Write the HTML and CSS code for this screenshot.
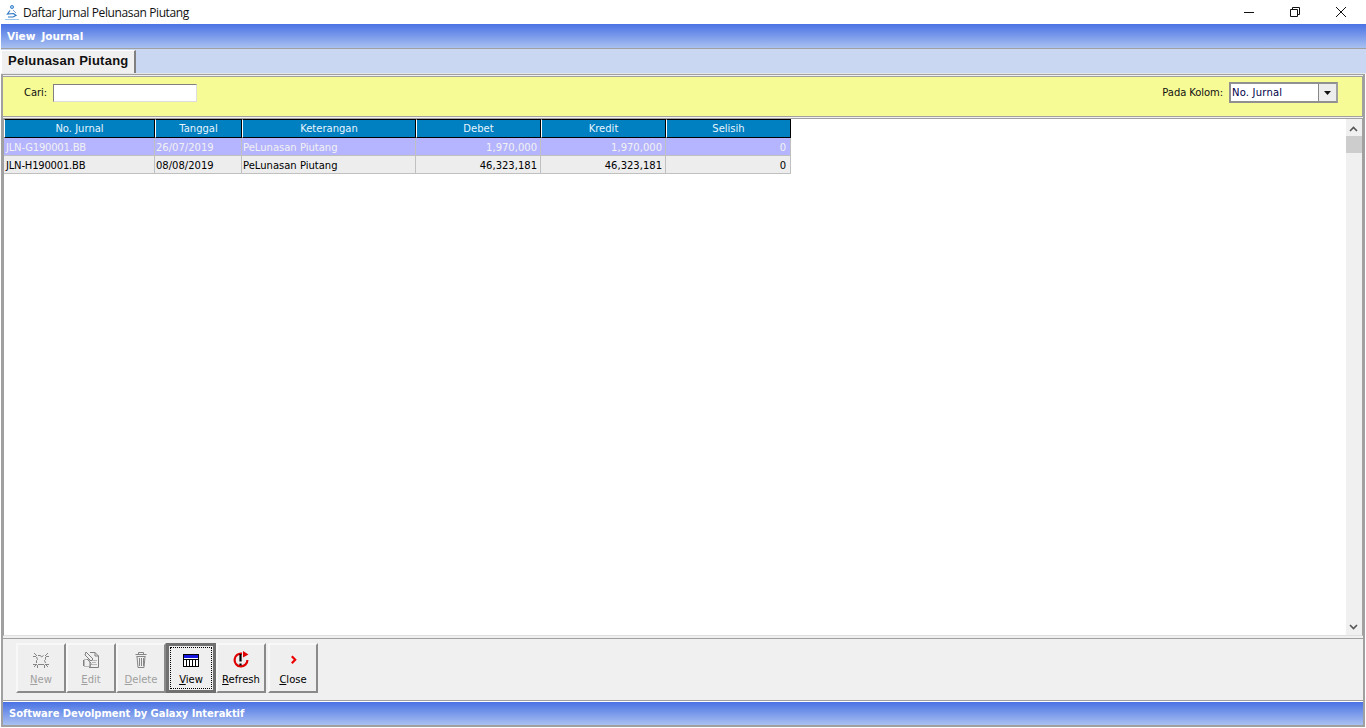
FILE: index.html
```html
<!DOCTYPE html>
<html lang="id">
<head>
<meta charset="utf-8">
<title>Daftar Jurnal Pelunasan Piutang</title>
<link rel="stylesheet" href="styles.css">
</head>
<body>
<div class="window">
  <header class="titlebar">
    <svg class="app-icon" width="16" height="16" viewBox="0 0 16 16" fill="none"><circle cx="8" cy="3" r="1.600" fill="#9cc6ea" stroke="#2f78c4" stroke-width=".8"/><path d="M6 6.500L3.500 10l6-.5 2.500 2-3 1.500H4" stroke="#2f78c4" stroke-width="1.200"/><path d="M9 6l3 3" stroke="#7a9fd0"/><path d="M1 15.500h14" stroke="#9cc6ea"/></svg>
    <span class="title">Daftar Jurnal Pelunasan Piutang</span>
    <div class="winctl">
      <svg width="12" height="12" viewBox="0 0 12 12"><path d="M1 6.500h10" stroke="#111" fill="none"/></svg>
      <svg width="12" height="12" viewBox="0 0 12 12"><path d="M1.500 3.500h7v7h-7zM3.500 3.500v-2h7v7h-2" stroke="#111" fill="none"/></svg>
      <svg width="12" height="12" viewBox="0 0 12 12"><path d="M1 1l10 10M11 1L1 11" stroke="#111" fill="none"/></svg>
    </div>
  </header>
  <div class="frame">
    <div class="banner menu"><span>View</span><span>Journal</span></div>
    <div class="tabstrip"><div class="tab">Pelunasan Piutang</div></div>
    <div class="tabbody">
      <div class="filter">
        <label class="lbl">Cari:</label>
        <div class="search"></div>
        <div class="spacer"></div>
        <label class="lbl">Pada Kolom:</label>
        <div class="combo"><span class="combo-text">No. Jurnal</span><span class="combo-btn"><svg width="7" height="4" viewBox="0 0 7 4"><path d="M0 0h7L3.500 4z" fill="#111"/></svg></span></div>
      </div>
      <div class="gridbox">
        <div class="grid">
          <div class="row head"><div class="c c1">No. Jurnal</div><div class="c c2">Tanggal</div><div class="c c3">Keterangan</div><div class="c c4">Debet</div><div class="c c5">Kredit</div><div class="c c6">Selisih</div></div>
          <div class="row sel"><div class="c c1">JLN-G190001.BB</div><div class="c c2">26/07/2019</div><div class="c c3">PeLunasan Piutang</div><div class="c c4">1,970,000</div><div class="c c5">1,970,000</div><div class="c c6">0</div></div>
          <div class="row norm"><div class="c c1">JLN-H190001.BB</div><div class="c c2">08/08/2019</div><div class="c c3">PeLunasan Piutang</div><div class="c c4">46,323,181</div><div class="c c5">46,323,181</div><div class="c c6">0</div></div>
        </div>
        <div class="scroll">
          <svg width="9" height="6" viewBox="0 0 9 6"><path d="M1 5l3.500-3.500L8 5" stroke="#555" stroke-width="1.600" fill="none"/></svg>
          <div class="thumb"></div>
          <div class="spacer"></div>
          <svg width="9" height="6" viewBox="0 0 9 6"><path d="M1 1l3.500 3.500L8 1" stroke="#555" stroke-width="1.600" fill="none"/></svg>
        </div>
      </div>
      <div class="toolbar">
        <button class="btn off"><svg width="20" height="20" viewBox="0 0 20 20" fill="none" stroke="#858585"><path d="M7 5.500h2.500l1 1.500 2-1.500M14.500 7v2.500l-1 1 1 2.500M13 14.500H7M5.500 13v-2.500l1-1-1-2.500"/><path d="M3 3l3 3M17 3l-3 3M3 17l3-3M17 17l-3-3M2 6.500h3M15 6.500h3M2 14.500h3M15 14.500h3M6.500 15v3M13.500 15v3"/></svg><span><u>N</u>ew</span></button>
        <button class="btn off"><svg width="20" height="20" viewBox="0 0 20 20" fill="none" stroke="#808080"><path d="M9 2.500h5l3.500 3.500v11.500H8"/><path d="M14 2.500V6h3.500M5 2l7 7-2 2-6-6z"/><path d="M3.500 9.500h5v7h-5zM10.500 10.500h5M11.500 12.500h4M10.500 14.500h5" stroke-dasharray="1 1"/><path d="M2.500 10v6M6 9l4 4-1 4"/></svg><span><u>E</u>dit</span></button>
        <button class="btn off"><svg width="20" height="20" viewBox="0 0 20 20" fill="none" stroke="#858585"><path d="M7.500 4V2.500h5V4M4.500 4.500h11M5.500 6.500h9"/><path d="M6 6.500l1 11h6l1-11M8.500 8v8M10.500 8v8M12.500 8v8"/></svg><span><u>D</u>elete</span></button>
        <button class="btn focus"><svg width="20" height="20" viewBox="0 0 20 20"><rect x="2.500" y="4.500" width="15" height="12" fill="#fff" stroke="#000"/><rect x="3" y="5" width="14" height="3" fill="#1616e0"/><path d="M3 9.500h14M5.500 10v6M8.500 10v6M11.500 10v6M14.500 10v6" stroke="#000"/></svg><span><u>V</u>iew</span></button>
        <button class="btn"><svg width="20" height="20" viewBox="0 0 20 20" fill="none"><path d="M11 3.700A6.400 6.400 0 1 0 16.400 10" stroke="#e00000" stroke-width="2.200"/><path d="M12 1l5.500 3.500L12 7.500z" fill="#e00000"/><path d="M9.500 4v7.500" stroke="#000" stroke-width="2.200"/><path d="M9.500 13.500v2" stroke="#000" stroke-width="2.200"/></svg><span><u>R</u>efresh</span></button>
        <button class="btn"><svg width="20" height="20" viewBox="0 0 20 20" fill="none"><path d="M8.800 6.200l3.400 3.500-3.400 3.500" stroke="#ee0000" stroke-width="2.200"/></svg><span><u>C</u>lose</span></button>
      </div>
    </div>
    <div class="banner status">Software Devolpment by Galaxy Interaktif</div>
  </div>
</div>
</body>
</html>
```
FILE: styles.css
```css
* { box-sizing: border-box; }
html, body { margin: 0; height: 100%; overflow: hidden; background: #fff; }
body { font-family: "DejaVu Sans", sans-serif; font-size: 10px; color: #000; }
.window { height: 728px; display: flex; flex-direction: column; }
.titlebar { height: 24px; display: flex; align-items: center; padding-left: 4px; flex: none; }
.app-icon { flex: none; }
.title { margin-left: 3px; font: 12px "Open Sans", sans-serif; letter-spacing: -0.38px; color: #111; }
.winctl { margin-left: auto; display: flex; gap: 34px; padding-right: 19px; }
.frame { flex: 1; display: flex; flex-direction: column; min-height: 0; margin: 0 1px 1px; border: 2px solid #a0a0a0; border-top: 0; }
.banner { background: linear-gradient(#4a72e4, #a9c1f1); color: #fff; font-weight: 700; flex: none; }
.menu { height: 25px; border-bottom: 1px solid #a0a0a0; display: flex; align-items: center; gap: 6px; font-size: 10.500px; margin: 0 -3px 0 -2px; padding-left: 6px; }
.tabstrip { height: 25px; background: #c9d7f3; border-bottom: 1px solid #e8e8e8; flex: none; padding-top: 1px; margin: 0 -3px 0 -2px; }
.tab { width: 135px; height: 23px; background: #f0f0f0; border-top: 1px solid #fff; border-right: 2px solid #808080; border-left: 1px solid #fff; font: 700 13px "Liberation Sans", sans-serif; letter-spacing: .25px; color: #111; padding: 2px 0 0 6px; white-space: nowrap; }
.tabbody { flex: 1; min-height: 0; display: flex; flex-direction: column; background: #f0f0f0; border-top: 1px solid #a0a0a0; padding-top: 1px; }
.filter { height: 41px; background: #f6fb96; border: 1px solid #a0a0a0; border-left: 0; display: flex; align-items: flex-start; padding: 7px 24px 0 21px; flex: none; }
.lbl { color: #111; margin-right: 6px; line-height: 17px; letter-spacing: -.08px; }
.search { width: 144px; height: 18px; background: #fff; border: 1px solid #808080; border-right-color: #ddd; border-bottom-color: #ddd; }
.spacer { flex: 1; }
.combo { width: 109px; height: 21px; margin-top: -2px; background: #fff; border: 2px solid #909090; border-right-color: #a0a0a0; display: flex; align-items: center; justify-content: space-between; color: #00004a; padding-left: 1px; letter-spacing: .2px; }
.combo-btn { width: 18px; height: 17px; background: #ededed; border-left: 1px solid #888; display: flex; align-items: center; justify-content: center; }
.gridbox { flex: 1; min-height: 0; margin: 1px 0 2px; background: #fff; border-top: 1px solid #a0a0a0; border-left: 1px solid #a0a0a0; border-right: 1px solid #a0a0a0; border-bottom: 1px solid #e0e0e0; display: flex; justify-content: space-between; }
.row { display: flex; height: 18px; }
.c { height: 100%; padding: 0 4px; display: flex; align-items: center; white-space: nowrap; flex: none; border-right: 1px solid #c0c0c0; border-bottom: 1px solid #c0c0c0; }
.sel .c, .norm .c { padding-top: 2px; }
.c1 { width: 151px; padding-left: 2px; }
.c2 { width: 87px; padding-left: 1px; }
.c3 { width: 174px; padding-left: 1px; }
.c4, .c5, .c6 { width: 125px; justify-content: flex-end; }
.c4, .c5 { padding-right: 3px; }
.sel .c1, .norm .c1 { letter-spacing: -.2px; }
.head { height: 19px; }
.head .c { background: #0080c0; color: #e8f4ff; justify-content: center; border-top: 1px solid #000; border-right: 1px solid #000; border-left: 1px solid #fff; border-bottom: 1px solid #000; padding: 0; }
.sel .c { background: #b5b5ff; color: #f2f2f2; }
.norm .c { background: #ededed; color: #000; }
.scroll { width: 16px; background: #f0f0f0; display: flex; flex-direction: column; align-items: center; padding: 7px 1px 5px 0; }
.thumb { width: 16px; height: 17px; margin-top: 4px; margin-right: -1px; background: #cdcdcd; }
.toolbar { height: 63px; display: flex; align-items: flex-start; padding: 4px 0 0 13px; flex: none; border-top: 1px solid #a0a0a0; border-bottom: 1px solid #a0a0a0; }
.btn { width: 50px; height: 50px; padding: 5px 0 0; margin: 0; background: #efefef; border: 2px solid; border-color: #f8f8f8 #8a8a8a #8a8a8a #f8f8f8; display: flex; flex-direction: column; align-items: center; gap: 4px; font: 10px/12px "DejaVu Sans", sans-serif; color: #000; flex: none; }
.btn svg { display: block; flex: none; }
.btn span { white-space: nowrap; }
.btn:nth-child(6) { margin-left: 2px; }
.off { color: #a0a0a0; }
.focus { border-color: #707070; box-shadow: inset 0 0 0 1px #707070; outline: 1px dotted #000; outline-offset: -5px; }
.status { height: 23px; display: flex; align-items: center; padding-left: 6px; font-size: 10px; letter-spacing: -.07px; margin-top: 1px; }
```
